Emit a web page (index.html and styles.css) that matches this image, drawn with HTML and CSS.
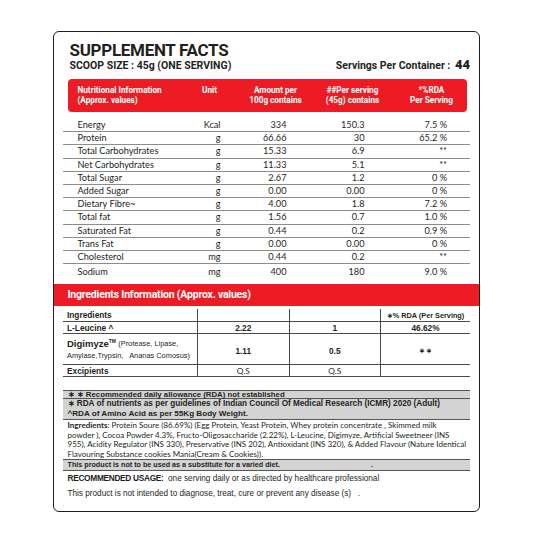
FILE: index.html
```html
<!DOCTYPE html>
<html lang="en">
<head>
  <meta charset="UTF-8">
  <meta name="viewport" content="width=device-width, initial-scale=1.0">
  <title>Supplement Facts</title>
  <link rel="stylesheet" href="styles.css">
</head>
<body>
  <div class="label">
    <!-- Title -->
    <div class="head">
      <h1>SUPPLEMENT FACTS</h1>
      <div class="serve-line">
        <span>SCOOP SIZE : 45g (ONE SERVING)</span>
        <span>Servings Per Container : <b>44</b></span>
      </div>
    </div>

    <!-- Nutrition table -->
    <div class="nutri-head">
      <div>Nutritional Information<br>(Approx. values)</div>
      <div>Unit</div>
      <div>Amount per<br>100g contains</div>
      <div>##Per serving<br>(45g) contains</div>
      <div>*%RDA<br>Per Serving</div>
    </div>
    <table class="nutri">
      <colgroup>
        <col class="c-name"><col class="c-unit"><col class="c-amt"><col class="c-srv"><col>
      </colgroup>
      <tr><td>Energy</td><td>Kcal</td><td>334</td><td>150.3</td><td>7.5 %</td></tr>
      <tr><td>Protein</td><td>g</td><td>66.66</td><td>30</td><td>65.2 %</td></tr>
      <tr><td>Total Carbohydrates</td><td>g</td><td>15.33</td><td>6.9</td><td>**</td></tr>
      <tr><td>Net Carbohydrates</td><td>g</td><td>11.33</td><td>5.1</td><td>**</td></tr>
      <tr><td>Total Sugar</td><td>g</td><td>2.67</td><td>1.2</td><td>0 %</td></tr>
      <tr><td>Added Sugar</td><td>g</td><td>0.00</td><td>0.00</td><td>0 %</td></tr>
      <tr><td>Dietary Fibre~</td><td>g</td><td>4.00</td><td>1.8</td><td>7.2 %</td></tr>
      <tr><td>Total fat</td><td>g</td><td>1.56</td><td>0.7</td><td>1.0 %</td></tr>
      <tr><td>Saturated Fat</td><td>g</td><td>0.44</td><td>0.2</td><td>0.9 %</td></tr>
      <tr><td>Trans Fat</td><td>g</td><td>0.00</td><td>0.00</td><td>0 %</td></tr>
      <tr><td>Cholesterol</td><td>mg</td><td>0.44</td><td>0.2</td><td>**</td></tr>
      <tr><td>Sodium</td><td>mg</td><td>400</td><td>180</td><td>9.0 %</td></tr>
    </table>

    <!-- Ingredients table -->
    <div class="band">Ingredients Information (Approx. values)</div>
    <table class="ingr">
      <colgroup>
        <col class="i-name"><col class="i-col"><col class="i-col"><col>
      </colgroup>
      <tr class="r-head"><td>Ingredients</td><td></td><td></td><td class="rda">&#8727;% RDA (Per Serving)</td></tr>
      <tr class="r-one"><td>L-Leucine ^</td><td>2.22</td><td>1</td><td>46.62%</td></tr>
      <tr class="r-digi">
        <td><span class="digi">Digimyze<sup>TM</sup></span> <span class="small">(Protease, Lipase,<br>Amylase,Trypsin,&nbsp;&nbsp; Ananas Comosus)</span></td>
        <td>1.11</td><td>0.5</td><td class="stars">&#8727; &#8727;</td>
      </tr>
      <tr class="r-one"><td>Excipients</td><td class="reg">Q.S</td><td class="reg">Q.S</td><td></td></tr>
    </table>

    <!-- Footnotes -->
    <div class="notes">
      <div class="bar bar-first">&#8727; &#8727; Recommended daily allowance (RDA) not established</div>
      <div class="bar bar-two">&#8727; RDA of nutrients as per guidelines of Indian Council Of Medical Research (ICMR) 2020 (Adult)<br><span class="amino">^RDA of Amino Acid as per 55Kg Body Weight.</span></div>
      <p class="ingr-text"><b>Ingredients</b>: Protein Soure (86.69%) (Egg Protein, Yeast Protein, Whey protein concentrate , Skimmed milk<br>powder ), Cocoa Powder 4.3%, Fructo-Oligosaccharide (2.22%), L-Leucine, Digimyze, Artificial Sweetneer (INS<br>955), Acidity Regulator (INS 330), Preservative (INS 202), Antioxidant (INS 320), &amp; Added Flavour (Nature Identical<br>Flavouring Substance cookies Mania(Cream &amp; Cookies)).</p>
      <div class="bar bar-diet">This product is not to be used as a substitute for a varied diet.<span class="dot">.</span></div>
      <p class="usage"><b>RECOMMENDED USAGE:</b>&nbsp; one serving daily or as directed by healthcare professional</p>
      <p class="disclaimer">This product is not intended to diagnose, treat, cure or prevent any disease (s)&nbsp;&nbsp;&nbsp;.</p>
    </div>
  </div>
</body>
</html>
```

FILE: styles.css
```css
* {
  box-sizing: border-box;
}
body {
  margin: 0;
  background: #fff;
  color: #231f20;
  font-family: "Liberation Sans", Arial, sans-serif;
}
.label {
  width: 427px;
  height: 481px;
  margin: 31px 0 0 53px;
  padding: 9px 9px 0;
  border: 1.5px solid #1e1e1e;
  border-radius: 6px;
  overflow: hidden;
}

/* title */
.head {
  padding-left: 6.5px;
}
.head h1 {
  margin: 0;
  font: 700 17px/18px Roboto, sans-serif;
  letter-spacing: -0.3px;
}
.serve-line {
  display: flex;
  justify-content: space-between;
  align-items: baseline;
  font: 700 10.5px/12px Roboto, sans-serif;
}
.serve-line b {
  font-size: 13px;
  margin-left: 2px;
}

/* nutrition */
.nutri-head {
  display: grid;
  grid-template-columns: 117px 50px 82px 72px 76px;
  margin: 6.5px 3.5px 0 4.5px;
  padding: 6px 0;
  background: #ed1c24;
  border-radius: 4px;
  color: #fff;
  font: 700 8.2px/10.5px Roboto, sans-serif;
  text-align: center;
}
.nutri-head div:first-child {
  text-align: left;
  padding-left: 10px;
}
.nutri-head div:last-child {
  padding-left: 10px;
}
.nutri {
  width: 100%;
  margin-top: 7.5px;
  border-collapse: collapse;
  table-layout: fixed;
  font: 9.2px/12.2px Lato, sans-serif;
}
.c-name { width: 126.5px; }
.c-unit { width: 35px; }
.c-amt { width: 66px; }
.c-srv { width: 78px; }
.nutri td {
  padding: 0 4px 0 0;
  border-bottom: 1px solid #8c8c8c;
  text-align: right;
  white-space: nowrap;
}
.nutri td:first-child {
  padding-left: 14.5px;
  text-align: left;
}
.nutri td:last-child {
  padding-right: 23px;
}
.nutri tr:last-child td {
  border-bottom: none;
  padding-top: 2px;
}

/* ingredients */
.band {
  margin: 6px -9px 0;
  height: 22px;
  padding-left: 13.5px;
  background: #ed1c24;
  color: #fff;
  font: 700 10.5px/22px Roboto, sans-serif;
  letter-spacing: -0.2px;
}
.ingr {
  width: 100%;
  margin-top: 3px;
  border-collapse: collapse;
  table-layout: fixed;
  font: 700 8.3px/10px "Liberation Sans", Arial, sans-serif;
}
.i-name { width: 134.5px; }
.i-col { width: 91.5px; }
.ingr td {
  padding: 0;
  border-bottom: 1px solid #4a4a4a;
  text-align: center;
  white-space: nowrap;
}
.ingr td + td {
  border-left: 1px solid #4a4a4a;
}
.ingr td:first-child {
  padding-left: 4px;
  text-align: left;
}
.r-head td {
  height: 11px;
}
.r-head .rda {
  font-size: 7.3px;
  padding-top: 2px;
}
.r-one td {
  height: 12px;
}
.r-digi td {
  height: 31px;
  padding-top: 12px;
  vertical-align: top;
}
.ingr .r-digi td:first-child {
  padding-top: 1px;
}
.ingr .stars {
  font-size: 7px;
}
.digi {
  font-size: 9.5px;
}
.digi sup {
  font-size: 5px;
}
.small {
  font-weight: 400;
  font-size: 7.4px;
  line-height: 10px;
}
.ingr .reg {
  font-weight: 400;
  font-family: Lato, sans-serif;
}

/* footnotes */
.notes {
  margin-top: 13px;
}
.bar {
  background: #d3d3d3;
  padding-left: 4.5px;
  font-weight: 700;
  border-bottom: 1px solid #555;
  white-space: nowrap;
}
.bar-first {
  border-top: 1px solid #555;
  font-size: 7.8px;
  line-height: 7px;
}
.bar-two {
  font-size: 8.2px;
  line-height: 10px;
}
.amino {
  font-size: 8.1px;
}
.ingr-text {
  margin: 0;
  padding: 0.5px 0 0 4.5px;
  border-bottom: 1px solid #555;
  font: 8px/9.6px Lato, sans-serif;
  white-space: nowrap;
}
.bar-diet {
  font-size: 7.2px;
  line-height: 10px;
}
.dot {
  margin-left: 91px;
}
.usage {
  margin: 0;
  padding-left: 4.5px;
  font-size: 8.2px;
  line-height: 14px;
}
.usage b {
  font-size: 8.3px;
  letter-spacing: -0.3px;
}
.disclaimer {
  margin: 1px 0 0;
  padding-left: 4.5px;
  font-size: 8.2px;
  line-height: 14px;
}
```
